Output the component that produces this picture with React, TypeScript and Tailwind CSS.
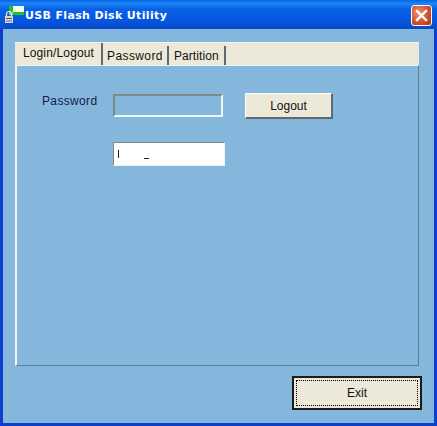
function AppIcon() {
  return (
    <svg width="20" height="22" viewBox="0 0 20 22" className="shrink-0">
      <rect x="5" y="2" width="16" height="9" fill="#22c02a" />
      <rect x="9" y="2" width="11" height="6" fill="#eefce8" />
      <rect x="5" y="8" width="4" height="3" fill="#7fd08a" />
      <path d="M2.5 12v-2a2.5 2.5 0 0 1 5 0v2" fill="none" stroke="#e6e6e6" strokeWidth="1.2" />
      <rect x="1" y="12" width="8" height="7" fill="#d8d8d8" />
      <rect x="2" y="14" width="6" height="1" fill="#555" />
      <rect x="2" y="16.5" width="6" height="1" fill="#777" />
    </svg>
  );
}

function CloseButton() {
  return (
    <div className="flex h-[21px] w-[21px] items-center justify-center rounded-[3px] border border-white bg-[radial-gradient(circle_at_35%_35%,#ea9478,#cf4b26_60%,#b8340f)]">
      <svg width="13" height="13" viewBox="0 0 13 13">
        <path d="M2 2l9 9M11 2l-9 9" stroke="#fff" strokeWidth="2.4" strokeLinecap="square" />
      </svg>
    </div>
  );
}

export default function App() {
  return (
    <div className="flex h-[426px] w-[437px] flex-col overflow-hidden bg-[#0a3fd0] font-['Liberation_Sans',Arial,sans-serif]">
      <div className="flex h-[29px] shrink-0 items-center justify-between bg-[linear-gradient(180deg,#0a5fe8_0%,#1a86f5_12%,#0a62e6_30%,#0556df_70%,#0a49c8_100%)] pl-[4px] pr-[5px] pt-[1px]">
        <div className="flex items-center gap-[1px]">
          <AppIcon />
          <span className="mt-[2px] font-['DejaVu_Sans',sans-serif] text-[11px] font-bold tracking-[0.35px] text-white">
            USB Flash Disk Utility
          </span>
        </div>
        <CloseButton />
      </div>

      <div className="mx-[3px] mb-[3px] flex flex-1 flex-col bg-[#85b7dd] pl-[12px] pr-[15px]">
        <div className="mt-[13px] flex h-[23px] items-stretch border-t border-t-white/60 bg-[#ece9d8] text-[12px] text-[#111]">
          <div className="flex h-[23px] w-[88px] items-center justify-center border-r-2 border-r-[#5f6a70] pb-[3px] pl-[1px] tracking-[0.15px]">
            Login/Logout
          </div>
          <div className="mt-[3px] flex h-[20px] items-center border-r-2 border-r-[#5f6a70] px-[4px] pb-[1px] tracking-[0.4px]">
            Password
          </div>
          <div className="mt-[3px] flex h-[20px] items-center border-r-2 border-r-[#5f6a70] px-[5px] pb-[1px] tracking-[0.1px]">
            Partition
          </div>
        </div>

        <div className="h-[301px] border-b border-l-2 border-r border-t border-b-[#5f7c8f] border-l-[#eef6fb] border-r-[#5f7c8f] border-t-[#eef6fb] pl-[25px] pt-[28px]">
          <div className="flex items-start">
            <span className="-mt-[2px] w-[71px] text-[12px] tracking-[0.35px] text-[#10204a]">Password</span>
            <div className="h-[23px] w-[110px] border-2 border-[#7d8a8c] border-b-[#eef6fb] border-r-[#eef6fb]" />
            <button className="-mt-[1px] ml-[22px] h-[26px] w-[88px] border-b-2 border-l border-r-2 border-t border-b-[#5f6a70] border-l-white border-r-[#5f6a70] border-t-white bg-[#ece9d8] text-[12px] text-[#111]">
              Logout
            </button>
          </div>
          <div className="ml-[71px] mt-[23px] flex h-[24px] w-[112px] items-center border border-b-[#eef6fb] border-l-[#7d8a8c] border-r-[#eef6fb] border-t-[#7d8a8c] bg-white pl-[4px]">
            <div className="h-[8px] w-px bg-[#222]" />
            <div className="ml-[25px] mt-[8px] h-px w-[5px] bg-[#222]" />
          </div>
        </div>

        <div className="mt-[10px] flex justify-end">
          <button className="-mr-[3px] h-[34px] w-[130px] border-2 border-[#1a1a1a] bg-[#ece9d8] p-[2px] text-[12px] text-[#111]">
            <span className="flex h-full w-full items-center justify-center border border-dotted border-black">Exit</span>
          </button>
        </div>
      </div>
    </div>
  );
}
